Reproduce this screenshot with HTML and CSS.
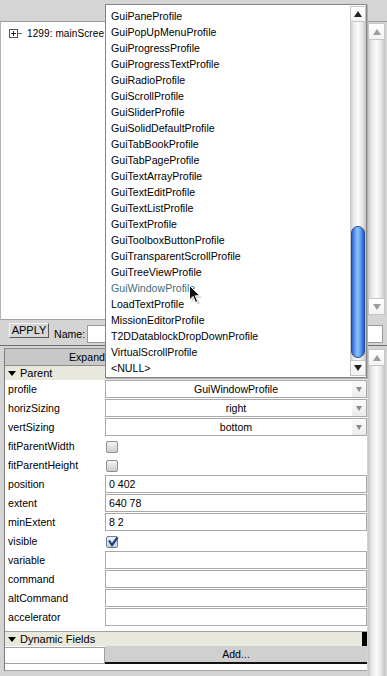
FILE: index.html
```html
<!DOCTYPE html>
<html>
<head>
<meta charset="utf-8">
<title>GUI Inspector</title>
<link rel="stylesheet" href="styles.css">
</head>
<body>
<div class="app">
  <div class="topbar"></div>

  <div class="tree-row">
    <div class="tree">
      <div class="tree-item">
        <svg class="expander" width="13" height="9" viewBox="0 0 13 9">
          <rect x="0.5" y="0.5" width="8" height="8" fill="#fff" stroke="#555"/>
          <path d="M2 4.5h5M4.5 2v5" stroke="#222"/>
          <path d="M9 4.5h4" stroke="#666"/>
        </svg>
        <span class="tree-label">1299: mainScree</span>
      </div>
    </div>
    <div class="vscroll tree-scroll">
      <div class="sb-btn up"></div>
      <div class="sb-track"></div>
      <div class="sb-btn down"></div>
    </div>
  </div>

  <div class="toolbar">
    <div class="apply">APPLY</div>
    <span class="name-label">Name:</span>
    <div class="name-field"></div>
  </div>

  <div class="insp-row">
    <div class="inspector">
      <div class="expand-bar">
        <div class="expand-btn">Expand</div>
      </div>
      <div class="group-hdr"><span class="tri"></span><span>Parent</span></div>

      <div class="field"><div class="label">profile</div><div class="value select"><span class="sel-text">GuiWindowProfile</span><span class="sel-arrow"></span></div></div>
      <div class="field"><div class="label">horizSizing</div><div class="value select"><span class="sel-text">right</span><span class="sel-arrow"></span></div></div>
      <div class="field"><div class="label">vertSizing</div><div class="value select"><span class="sel-text">bottom</span><span class="sel-arrow"></span></div></div>
      <div class="field"><div class="label">fitParentWidth</div><div class="check-cell"><span class="check"></span></div></div>
      <div class="field"><div class="label">fitParentHeight</div><div class="check-cell"><span class="check"></span></div></div>
      <div class="field"><div class="label">position</div><div class="value">0 402</div></div>
      <div class="field"><div class="label">extent</div><div class="value">640 78</div></div>
      <div class="field"><div class="label">minExtent</div><div class="value">8 2</div></div>
      <div class="field"><div class="label">visible</div><div class="check-cell"><span class="check checked"><svg width="12" height="12" viewBox="0 0 12 12"><path d="M2 4.5 L5 9 L10.5 1.5" fill="none" stroke="#1d3f86" stroke-width="2.2"/></svg></span></div></div>
      <div class="field"><div class="label">variable</div><div class="value"></div></div>
      <div class="field"><div class="label">command</div><div class="value"></div></div>
      <div class="field"><div class="label">altCommand</div><div class="value"></div></div>
      <div class="field"><div class="label">accelerator</div><div class="value"></div></div>

      <div class="spacer"></div>
      <div class="group-hdr dyn"><span class="tri"></span><span class="grow">Dynamic Fields</span><span class="blk"></span></div>
      <div class="add-row">
        <div class="add-field"></div>
        <div class="add-btn">Add...</div>
      </div>
      <div class="bottom-line"></div>
    </div>
    <div class="vscroll insp-scroll">
      <div class="sb-btn up"></div>
      <div class="sb-track"></div>
    </div>
  </div>

  <div class="dropdown">
    <ul class="list">
      <li>GuiPaneProfile</li>
      <li>GuiPopUpMenuProfile</li>
      <li>GuiProgressProfile</li>
      <li>GuiProgressTextProfile</li>
      <li>GuiRadioProfile</li>
      <li>GuiScrollProfile</li>
      <li>GuiSliderProfile</li>
      <li>GuiSolidDefaultProfile</li>
      <li>GuiTabBookProfile</li>
      <li>GuiTabPageProfile</li>
      <li>GuiTextArrayProfile</li>
      <li>GuiTextEditProfile</li>
      <li>GuiTextListProfile</li>
      <li>GuiTextProfile</li>
      <li>GuiToolboxButtonProfile</li>
      <li>GuiTransparentScrollProfile</li>
      <li>GuiTreeViewProfile</li>
      <li class="hover">GuiWindowProfile</li>
      <li>LoadTextProfile</li>
      <li>MissionEditorProfile</li>
      <li>T2DDatablockDropDownProfile</li>
      <li>VirtualScrollProfile</li>
      <li>&lt;NULL&gt;</li>
    </ul>
    <div class="vscroll dd-scroll">
      <div class="sb-btn up"></div>
      <div class="sb-track"><div class="thumb"></div></div>
      <div class="sb-btn down"></div>
    </div>
  </div>

  <svg class="cursor" width="14" height="21" viewBox="0 0 14 21">
    <path d="M2.5 2.5 L2.5 17 L6 13.5 L8.5 19.5 L10.8 18.5 L8.3 12.8 L13 12.8 Z" fill="#777" opacity="0.35"/>
    <path d="M0.5 0.5 L0.5 15 L4 11.5 L6.5 17.5 L8.8 16.5 L6.3 10.8 L11 10.8 Z" fill="#111" stroke="#fff" stroke-width="1"/>
  </svg>
</div>
</body>
</html>
```

FILE: styles.css
```css
* { box-sizing: border-box; }
html, body { margin: 0; padding: 0; }
body {
  background: #d4d4d4;
  font-family: "Liberation Sans", Arial, sans-serif;
  font-size: 10.6px;
  color: #000;
}
.app {
  position: relative;
  width: 387px;
  height: 676px;
  overflow: hidden;
  background: #d4d4d4;
}

/* top strip */
.topbar {
  height: 22px;
  background: #d5d5d5;
  border-bottom: 1px solid #9a9a9a;
}

/* tree */
.tree-row {
  display: flex;
  height: 298px;
}
.tree {
  width: 366px;
  background: #fff;
  border-left: 1px solid #b4b4b4;
  border-right: 1px solid #a8a8a8;
  border-bottom: 1px solid #a0a0a0;
  padding: 7px 0 0 8px;
}
.tree-item {
  display: flex;
  align-items: center;
  height: 9px;
}
.expander { display: block; flex: none; }
.tree-label {
  margin-left: 5px;
  font-size: 10px;
  letter-spacing: 0.1px;
  white-space: nowrap;
  line-height: 11px;
}

/* scrollbars */
.vscroll {
  display: flex;
  flex-direction: column;
  width: 17px;
  flex: none;
}
.tree-scroll { margin: 1px 0 0 2px; height: 292px; }
.sb-btn {
  height: 17px;
  flex: none;
  background: linear-gradient(#ffffff, #f2f2f2);
  border: 1px solid #c6c6c6;
  display: flex;
  align-items: center;
  justify-content: center;
}
.sb-btn::after {
  content: "";
  width: 0;
  height: 0;
  border-left: 4px solid transparent;
  border-right: 4px solid transparent;
}
.sb-btn.up::after { border-bottom: 6px solid #9c9c9c; }
.sb-btn.down::after { border-top: 6px solid #9c9c9c; }
.sb-track {
  flex: 1;
  background: linear-gradient(to right, #c4c4c4, #e8e8e8 22%, #fbfbfb 50%, #e6e6e6 78%, #c2c2c2);
}

/* toolbar */
.toolbar {
  height: 26px;
  display: flex;
  align-items: flex-start;
  padding-left: 9px;
  border-bottom: 1px solid #6e6e6e;
}
.apply {
  margin-top: 3px;
  width: 40px;
  height: 15px;
  line-height: 13px;
  text-align: center;
  background: #d6d6d6;
  border: 1px solid;
  border-color: #f4f4f4 #5a5a5a #5a5a5a #f4f4f4;
  font-size: 11px;
}
.name-label {
  margin: 8px 0 0 5px;
  width: 33px;
  line-height: 12px;
}
.name-field {
  margin-top: 5px;
  width: 296px;
  height: 18px;
  background: #fff;
  border: 1px solid #9a9a9a;
}

/* inspector */
.insp-row {
  display: flex;
  height: 330px;
  padding: 2px 0 0 4px;
}
.inspector {
  width: 363px;
  background: #fff;
  border-left: 1px solid #7c7c7c;
  border-top: 1px solid #8a8a8a;
  align-self: flex-start;
}
.insp-scroll { margin: 1px 0 0 1px; height: 340px; }
.expand-bar {
  display: flex;
  height: 17px;
  background: #c8c8c8;
  border-bottom: 1px solid #8c8c8c;
}
.expand-btn {
  padding-left: 64px;
  line-height: 16px;
  white-space: nowrap;
}
.group-hdr {
  display: flex;
  align-items: center;
  height: 14px;
  background: #e9e8dc;
  padding-left: 3px;
  font-size: 11px;
}
.tri {
  width: 0;
  height: 0;
  border-left: 4px solid transparent;
  border-right: 4px solid transparent;
  border-top: 5px solid #000;
  margin-right: 4px;
}
.field {
  display: flex;
  height: 19px;
}
.label {
  width: 100px;
  padding-left: 3px;
  line-height: 18px;
  white-space: nowrap;
}
.value {
  width: 262px;
  height: 18px;
  border: 1px solid #a9a9a9;
  padding-left: 3px;
  line-height: 16px;
  white-space: nowrap;
}
.value.select {
  display: flex;
  padding-left: 14px;
}
.sel-text {
  flex: 1;
  text-align: center;
}
.sel-arrow {
  width: 14px;
  display: flex;
  align-items: center;
  justify-content: center;
  background: linear-gradient(#fbfbfb, #ececec);
}
.sel-arrow::after {
  content: "";
  border-left: 3px solid transparent;
  border-right: 3px solid transparent;
  border-top: 5px solid #8a8a8a;
}
.check-cell {
  width: 262px;
  padding: 4px 0 0 1px;
}
.check {
  display: block;
  width: 12px;
  height: 12px;
  border: 1px solid #8f8f8f;
  border-radius: 2px;
  background: linear-gradient(#f3f3f3, #cdcdcd);
}
.check svg { display: block; margin: -1px 0 0 0; }
.check.checked { border-color: #6f7f95; background: linear-gradient(#eef2f8, #c9d1dc); }

.spacer {
  height: 5px;
  border-bottom: 1px solid #a0a0a0;
}
.group-hdr.dyn { height: 14px; padding-right: 0; }
.grow { flex: 1; }
.blk {
  width: 5px;
  align-self: stretch;
  background: #000;
}
.add-row {
  display: flex;
  height: 18px;
}
.add-field {
  width: 100px;
  height: 17px;
  margin-top: 1px;
  border: 1px solid #a0a0a0;
  border-left: none;
  background: #fff;
}
.add-btn {
  width: 262px;
  height: 18px;
  background: #d0d0d0;
  border-bottom: 2px solid #111;
  text-align: center;
  line-height: 16px;
}
.bottom-line {
  height: 7px;
  border-bottom: 1px solid #a4a4a4;
}

/* dropdown popup */
.dropdown {
  position: absolute;
  left: 105px;
  top: 4px;
  width: 262px;
  height: 374px;
  background: #fff;
  border: 1px solid #858585;
  display: flex;
  box-shadow: 1px 1px 0 #b0b0b0;
}
.list {
  list-style: none;
  margin: 0;
  padding: 3px 0 0 5px;
  width: 244px;
}
.list li {
  height: 16px;
  line-height: 16px;
  white-space: nowrap;
}
.list li.hover { color: #3f6f78; }
.dd-scroll {
  width: 16px;
  margin-top: 1px;
  height: 370px;
}
.dd-scroll .sb-btn { height: 16px; }
.dd-scroll .sb-btn.up::after { border-bottom-color: #222; }
.dd-scroll .sb-btn.down::after { border-top-color: #222; }
.dd-scroll .sb-track {
  display: flex;
  flex-direction: column;
  align-items: center;
}
.thumb {
  margin-top: 204px;
  width: 14px;
  height: 132px;
  border-radius: 7px;
  border: 1px solid #1b4aa3;
  background: linear-gradient(to right, #2a63cc, #79b0f6 35%, #8fbffb 50%, #4b8ae6 80%, #2259c2);
}

.cursor {
  position: absolute;
  left: 189px;
  top: 285px;
}
```
